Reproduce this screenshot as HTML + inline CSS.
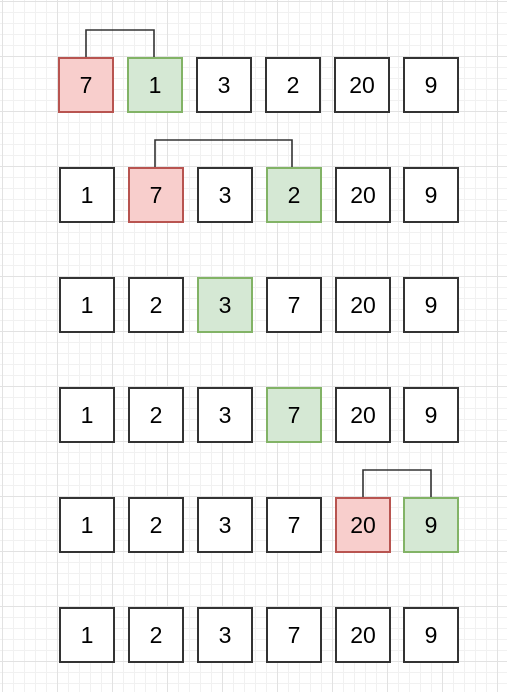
<!DOCTYPE html>
<html><head><style>
html,body{margin:0;padding:0}
body{width:507px;height:692px;position:relative;overflow:hidden;background:#fff;
background-image:
linear-gradient(to right,#e2e2e2 1px,transparent 1px),
linear-gradient(to bottom,#e2e2e2 1px,transparent 1px),
linear-gradient(to right,#f1f1f1 1px,transparent 1px),
linear-gradient(to bottom,#f1f1f1 1px,transparent 1px);
background-size:55px 55px,55px 55px,11px 11px,11px 11px;
background-position:2px 1px,2px 1px,2px 1px,2px 1px;
font-family:"Liberation Sans",Arial,sans-serif}
.b{position:absolute;width:52px;height:52px;border:2px solid #333;background:#fff;box-sizing:content-box;
display:flex;align-items:center;justify-content:center;font-size:23px;color:#000}
.r{background:#f8cecc;border-color:#b85450}
.g{background:#d5e8d4;border-color:#82b366}
svg{position:absolute;left:0;top:0}
</style></head><body>
<svg width="507" height="692"><g fill="none" stroke="#333" stroke-width="1.6">
<polyline points="86,57 86,30 154,30 154,57"/>
<polyline points="155,167 155,140 292,140 292,167"/>
<polyline points="363,497 363,470 431,470 431,497"/>
</g></svg>
<div class="b r" style="left:58px;top:57px">7</div>
<div class="b g" style="left:127px;top:57px">1</div>
<div class="b" style="left:196px;top:57px">3</div>
<div class="b" style="left:265px;top:57px">2</div>
<div class="b" style="left:334px;top:57px">20</div>
<div class="b" style="left:403px;top:57px">9</div>

<div class="b" style="left:59px;top:167px">1</div>
<div class="b r" style="left:128px;top:167px">7</div>
<div class="b" style="left:197px;top:167px">3</div>
<div class="b g" style="left:266px;top:167px">2</div>
<div class="b" style="left:335px;top:167px">20</div>
<div class="b" style="left:403px;top:167px">9</div>

<div class="b" style="left:59px;top:277px">1</div>
<div class="b" style="left:128px;top:277px">2</div>
<div class="b g" style="left:197px;top:277px">3</div>
<div class="b" style="left:266px;top:277px">7</div>
<div class="b" style="left:335px;top:277px">20</div>
<div class="b" style="left:403px;top:277px">9</div>

<div class="b" style="left:59px;top:387px">1</div>
<div class="b" style="left:128px;top:387px">2</div>
<div class="b" style="left:197px;top:387px">3</div>
<div class="b g" style="left:266px;top:387px">7</div>
<div class="b" style="left:335px;top:387px">20</div>
<div class="b" style="left:403px;top:387px">9</div>

<div class="b" style="left:59px;top:497px">1</div>
<div class="b" style="left:128px;top:497px">2</div>
<div class="b" style="left:197px;top:497px">3</div>
<div class="b" style="left:266px;top:497px">7</div>
<div class="b r" style="left:335px;top:497px">20</div>
<div class="b g" style="left:403px;top:497px">9</div>

<div class="b" style="left:59px;top:607px">1</div>
<div class="b" style="left:128px;top:607px">2</div>
<div class="b" style="left:197px;top:607px">3</div>
<div class="b" style="left:266px;top:607px">7</div>
<div class="b" style="left:335px;top:607px">20</div>
<div class="b" style="left:403px;top:607px">9</div>
</body></html>
